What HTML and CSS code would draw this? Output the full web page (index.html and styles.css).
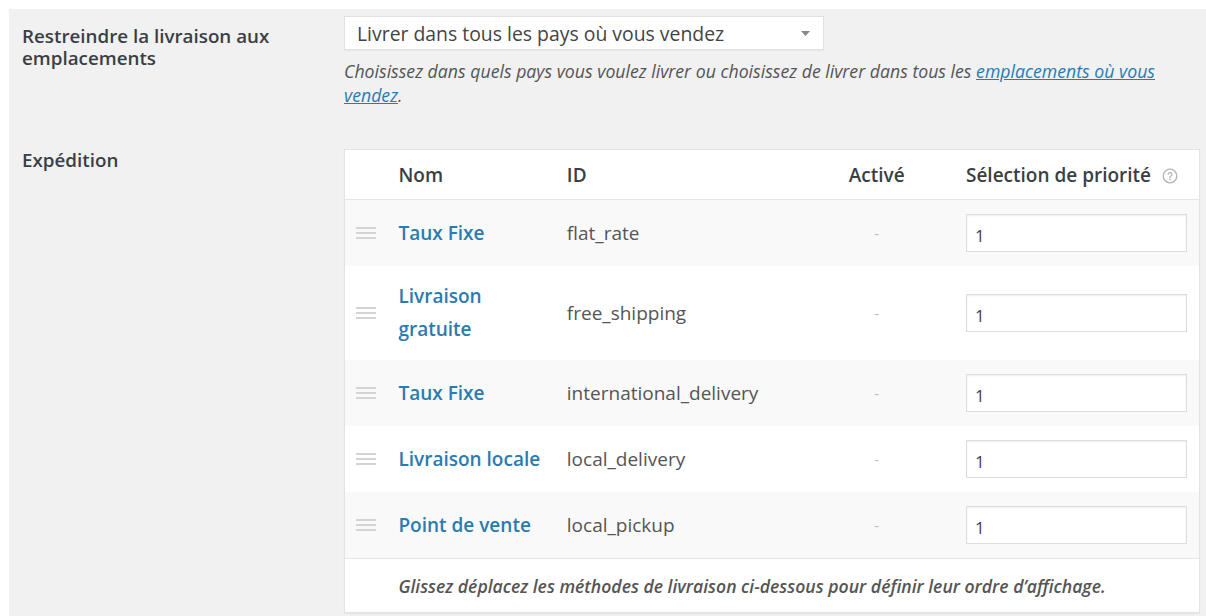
FILE: index.html
```html
<!DOCTYPE html>
<html lang="fr">
<head>
<meta charset="utf-8">
<title>Options de livraison</title>
<link rel="stylesheet" href="styles.css">
</head>
<body>
<div class="panel">
  <div class="field">
    <div class="field-label">Restreindre la livraison aux emplacements</div>
    <div class="field-control">
      <div class="select" role="combobox" aria-expanded="false">
        <span class="select-value">Livrer dans tous les pays où vous vendez</span>
        <svg class="select-arrow" width="9" height="5" viewBox="0 0 9 5"><path d="M0 0h9L4.5 5z" fill="#888"/></svg>
      </div>
      <p class="description"><span>Choisissez dans quels pays vous voulez livrer ou choisissez de livrer dans tous les</span> <a href="#"><span>emplacements où vous</span> <span>vendez</span></a>.</p>
    </div>
  </div>

  <div class="field field-shipping">
    <div class="field-label">Expédition</div>
    <div class="field-control">
      <table class="methods">
        <thead>
          <tr>
            <th class="col-sort"></th>
            <th class="col-name">Nom</th>
            <th class="col-id">ID</th>
            <th class="col-status">Activé</th>
            <th class="col-priority">Sélection de priorité
              <svg class="help" width="16" height="16" viewBox="0 0 16 16"><circle cx="8" cy="8" r="6.8" fill="none" stroke="#b4b4b4" stroke-width="1.3"/><path d="M6.1 6.4a1.9 1.9 0 1 1 2.6 1.8c-.5.2-.7.6-.7 1.1v.5" fill="none" stroke="#b4b4b4" stroke-width="1.3" stroke-linecap="round"/><circle cx="8" cy="11.6" r=".8" fill="#b4b4b4"/></svg>
            </th>
          </tr>
        </thead>
        <tbody>
          <tr>
            <td class="col-sort"><span class="handle"></span></td>
            <td class="col-name"><a href="#">Taux Fixe</a></td>
            <td class="col-id">flat_rate</td>
            <td class="col-status">-</td>
            <td class="col-priority"><input type="text" value="1"></td>
          </tr>
          <tr>
            <td class="col-sort"><span class="handle"></span></td>
            <td class="col-name"><a href="#">Livraison gratuite</a></td>
            <td class="col-id">free_shipping</td>
            <td class="col-status">-</td>
            <td class="col-priority"><input type="text" value="1"></td>
          </tr>
          <tr>
            <td class="col-sort"><span class="handle"></span></td>
            <td class="col-name"><a href="#">Taux Fixe</a></td>
            <td class="col-id">international_delivery</td>
            <td class="col-status">-</td>
            <td class="col-priority"><input type="text" value="1"></td>
          </tr>
          <tr>
            <td class="col-sort"><span class="handle"></span></td>
            <td class="col-name"><a href="#">Livraison locale</a></td>
            <td class="col-id">local_delivery</td>
            <td class="col-status">-</td>
            <td class="col-priority"><input type="text" value="1"></td>
          </tr>
          <tr>
            <td class="col-sort"><span class="handle"></span></td>
            <td class="col-name"><a href="#">Point de vente</a></td>
            <td class="col-id">local_pickup</td>
            <td class="col-status">-</td>
            <td class="col-priority"><input type="text" value="1"></td>
          </tr>
        </tbody>
        <tfoot>
          <tr>
            <td></td>
            <td colspan="4" class="hint">Glissez déplacez les méthodes de livraison ci-dessous pour définir leur ordre d’affichage.</td>
          </tr>
        </tfoot>
      </table>
    </div>
  </div>
</div>
</body>
</html>
```

FILE: styles.css
```css
* { box-sizing: border-box; }

html, body {
  margin: 0;
  padding: 0;
  background: #fff;
}

body {
  font-family: "Open Sans", "Noto Sans", sans-serif;
  color: #444;
  width: 1206px;
  height: 616px;
  overflow: hidden;
}

.panel {
  margin: 9px 0 0 9px;
  height: 607px;
  background: #f1f1f1;
  padding: 7px 6px 0 13px;
}

.field {
  display: grid;
  grid-template-columns: 322px 1fr;
}

.field-label {
  font-size: 18.8px;
  font-weight: 600;
  line-height: 22px;
  color: #3a3f44;
  padding-top: 9px;
  padding-right: 30px;
}

.field-shipping {
  margin-top: 42px;
}

.field-shipping .field-label {
  padding-top: 0;
}

/* dropdown */
.select {
  width: 480px;
  height: 34px;
  background: #fff;
  border: 1px solid #e2e2e2;
  box-shadow: 0 1px 1px rgba(0, 0, 0, 0.04);
  display: flex;
  align-items: center;
  justify-content: space-between;
  padding: 0 12px 0 12px;
}

.select-value {
  font-size: 19.4px;
  color: #444;
}

.select-arrow {
  margin-right: 1px;
}

.description {
  margin: 9px 0 0;
  font-size: 17.7px;
  font-style: italic;
  line-height: 24px;
  color: #555;
  padding-right: 30px;
}

.description a {
  color: #2a7bb0;
}

/* shipping methods table */
.methods {
  width: 856px;
  border-collapse: collapse;
  background: #fff;
  border: 1px solid #e3e3e3;
  box-shadow: 0 1px 1px rgba(0, 0, 0, 0.05);
  font-size: 19px;
}

.methods th {
  height: 50px;
  padding: 0 12px;
  text-align: left;
  font-weight: 600;
  color: #3a3f44;
  border-bottom: 1px solid #e5e5e5;
  white-space: nowrap;
}

.methods td {
  padding: 14px 12px;
  line-height: 33px;
  vertical-align: middle;
  color: #555;
}

.methods tbody tr:nth-child(odd) td {
  background: #f9f9f9;
}

.methods .col-sort {
  width: 42px;
  padding: 0 0 0 11px;
}

.methods .col-name {
  width: 169px;
  padding-right: 6px;
}

.methods .col-id {
  width: 245px;
}

.methods .col-status {
  width: 155px;
  text-align: center;
}

.methods td.col-status {
  color: #bbb;
  font-size: 15px;
}

.methods .col-priority {
  width: 245px;
}

.methods td.col-name a {
  color: #2a7bb0;
  font-weight: 600;
  text-decoration: none;
  display: block;
}

.help {
  vertical-align: -2px;
  margin-left: 6px;
}

.handle {
  display: block;
  width: 20px;
  height: 12px;
  border-top: 2px solid #d4d4d4;
  border-bottom: 2px solid #d4d4d4;
  position: relative;
}

.handle::after {
  content: "";
  position: absolute;
  left: 0;
  right: 0;
  top: 3px;
  height: 2px;
  background: #d4d4d4;
}

.methods input {
  width: 221px;
  height: 38px;
  border: 1px solid #ddd;
  box-shadow: inset 0 1px 2px rgba(0, 0, 0, 0.07);
  background: #fff;
  font-family: inherit;
  font-size: 17px;
  color: #444;
  padding: 4px 8px 0;
  display: block;
}

.methods tfoot td {
  border-top: 1px solid #e5e5e5;
  padding: 10px 12px;
  height: 54px;
  background: #fff;
}

.methods tfoot td.hint {
  font-style: italic;
  font-weight: 600;
  font-size: 17.6px;
  color: #555;
  line-height: 24px;
}
```
